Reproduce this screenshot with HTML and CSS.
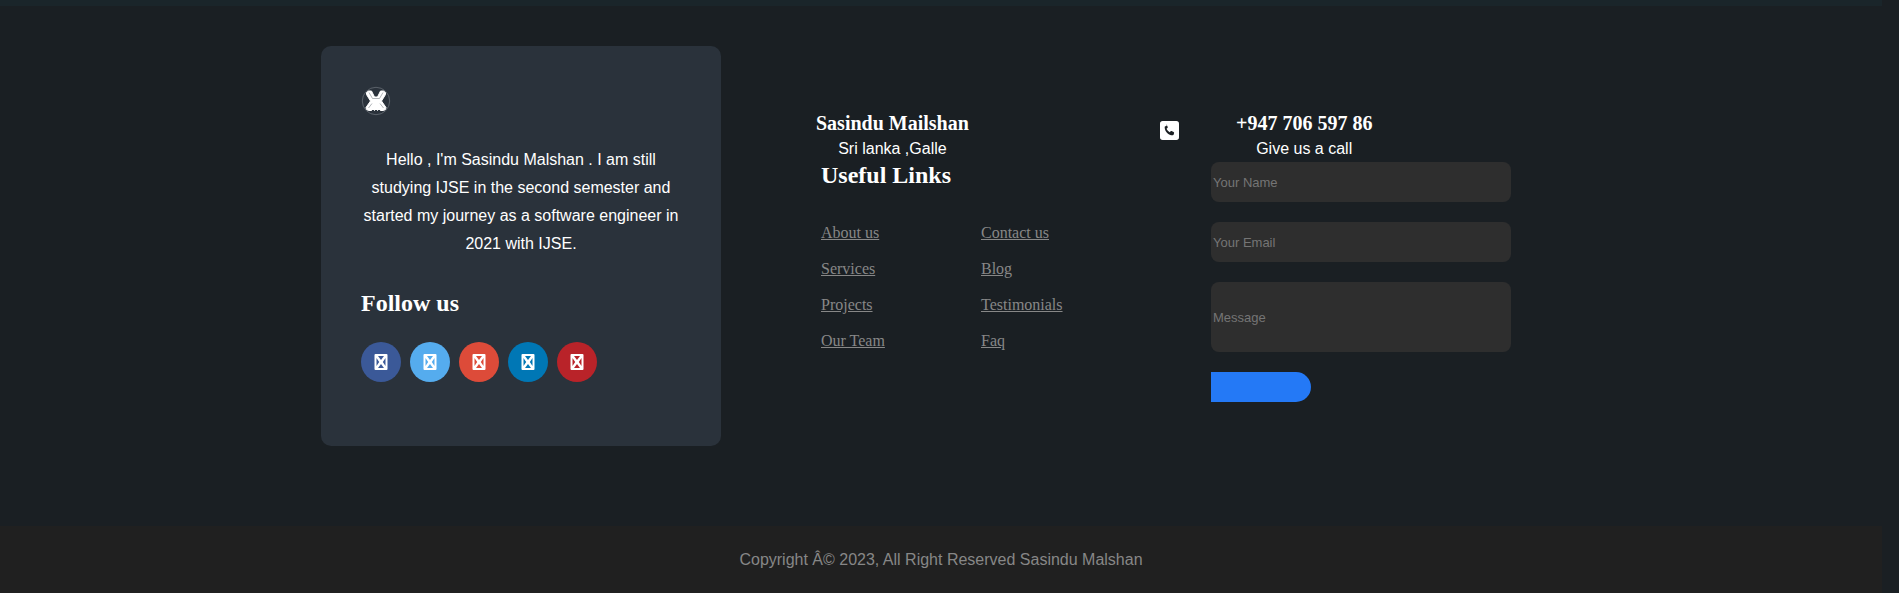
FILE: index.html
```html
<!DOCTYPE html>
<html lang="en">
<head>
<meta charset="utf-8">
<title>Sasindu Malshan</title>
<link rel="stylesheet" href="styles.css">
</head>
<body>
<svg class="sprite" aria-hidden="true">
  <symbol id="box" viewBox="0 0 14 16"><path fill="#fff" fill-rule="evenodd" d="M1.500 0h11a1 1 0 0 1 1 1v14a1 1 0 0 1-1 1h-11a1 1 0 0 1-1-1V1a1 1 0 0 1 1-1zM4 2h6L7 6zM2.500 4L5.200 8l-2.700 4zM11.500 4v8L8.800 8zM7 10l3 4h-6z"/></symbol>
</svg>
<div class="band"></div>
<footer>
  <div class="container">
    <section class="card">
      <a class="logo" href="#" aria-label="Home">
        <svg viewBox="0 0 30 30" width="30" height="30">
          <circle cx="15" cy="15" r="13.700" fill="none" stroke="#5b626a"/>
          <path fill="#fff" stroke="#fff" stroke-width="1" stroke-linejoin="round" d="M5.500 6.500l2-1.500h3l3 6h3l3-6h3l2 1.500v2l-4 6.500 4.500 6.500-.5 2-2 1h-3l-1.500-1.500-1.500 1.500-1.500-1.500-1.500 1.500-1.500-1.500-1.500 1.500h-3l-2-1-.5-2 4.500-6.500-4-6.500z"/>
          <path fill="none" stroke="#8f959b" stroke-width=".7" d="M8 6.500l3.500 6h7L22 6.500M7.500 22l3.500-4.500M22.500 22L19 17.500"/>
        </svg>
      </a>
      <p class="about">Hello , I'm Sasindu Malshan . I am still studying IJSE in the second semester and started my journey as a software engineer in 2021 with IJSE.</p>
      <h3 class="follow">Follow us</h3>
      <nav class="social" aria-label="Social">
        <a class="facebook" href="#" aria-label="Facebook"><svg width="14" height="16"><use href="#box"/></svg></a>
        <a class="twitter" href="#" aria-label="Twitter"><svg width="14" height="16"><use href="#box"/></svg></a>
        <a class="google" href="#" aria-label="Google"><svg width="14" height="16"><use href="#box"/></svg></a>
        <a class="linkedin" href="#" aria-label="LinkedIn"><svg width="14" height="16"><use href="#box"/></svg></a>
        <a class="pinterest" href="#" aria-label="Pinterest"><svg width="14" height="16"><use href="#box"/></svg></a>
      </nav>
    </section>
    <section class="links">
      <div class="info">
        <h4>Sasindu Mailshan</h4>
        <p>Sri lanka ,Galle</p>
      </div>
      <h3>Useful Links</h3>
      <ul>
        <li><a href="#">About us</a></li>
        <li><a href="#">Contact us</a></li>
        <li><a href="#">Services</a></li>
        <li><a href="#">Blog</a></li>
        <li><a href="#">Projects</a></li>
        <li><a href="#">Testimonials</a></li>
        <li><a href="#">Our Team</a></li>
        <li><a href="#">Faq</a></li>
      </ul>
    </section>
    <svg class="phone" viewBox="0 0 448 448" width="19" height="19" aria-hidden="true"><path fill="#fff" fill-rule="evenodd" d="M64 0H384a64 64 0 0 1 64 64V384a64 64 0 0 1-64 64H64a64 64 0 0 1-64-64V64A64 64 0 0 1 64 0zM165 112L126 123c-10 3-17 12-16 22 4 106 90 187 190 191 10 1 19-6 22-16l11-40c2-9-3-19-12-23l-48-20c-8-3-17-1-23 6l-18 22c-35-17-62-46-78-80l22-18c7-5 9-15 6-23l-20-48c-3-7-12-11-20-9z"/></svg>
    <section class="contact">
      <div class="info">
        <h4>+947 706 597 86</h4>
        <p>Give us a call</p>
      </div>
      <form>
        <input type="text" placeholder="Your Name" aria-label="Your Name">
        <input type="email" placeholder="Your Email" aria-label="Your Email">
        <input class="message" type="text" placeholder="Message" aria-label="Message">
        <button type="button" aria-label="Send"></button>
      </form>
    </section>
  </div>
  <div class="copyright"><p>Copyright Â© 2023, All Right Reserved Sasindu Malshan</p></div>
</footer>
</body>
</html>
```
FILE: styles.css
```css
* {
  box-sizing: border-box;
  margin: 0;
  padding: 0;
}

body {
  padding-right: 17px;
  background: #1a1f23;
  color: #fff;
  font-family: "Liberation Serif", "Times New Roman", serif;
  font-size: 16px;
}

p {
  font-family: "Liberation Sans", Arial, sans-serif;
  line-height: 28px;
  text-align: center;
}

h3 {
  font-size: 24px;
  line-height: 27px;
}

h4 {
  font-size: 20px;
  line-height: 24px;
}

.sprite {
  display: none;
}

.band {
  height: 6px;
  background: #1a252a;
}

.container {
  display: flex;
  align-items: flex-start;
  max-width: 1240px;
  margin: 0 auto;
  padding: 40px 0 80px;
}

.card {
  flex: none;
  width: 400px;
  min-height: 400px;
  padding: 40px;
  border-radius: 10px;
  background: #2a323b;
}

.logo {
  display: block;
  height: 30px;
  margin-bottom: 30px;
}

.about {
  margin-bottom: 32px;
}

.follow {
  margin-bottom: 25px;
}

.social {
  display: flex;
  gap: 9px;
}

.social a {
  display: flex;
  align-items: center;
  justify-content: center;
  width: 40px;
  height: 40px;
  border-radius: 50%;
}

.facebook { background: #3b5998; }
.twitter { background: #55acee; }
.google { background: #dd4b39; }
.linkedin { background: #0077b5; }
.pinterest { background: #b92329; }

.info {
  width: fit-content;
}

.info p {
  line-height: 27px;
}

.links {
  flex: 1;
  margin-left: 95px;
  padding-top: 65px;
}

.links h3,
.links ul {
  margin-left: 5px;
}

.links ul {
  display: grid;
  grid-template-columns: 160px 160px;
  row-gap: 18px;
  margin-top: 35px;
  list-style: none;
}

.links li {
  line-height: 18px;
}

.links a {
  color: #878787;
}

.phone {
  flex: none;
  margin: 75px 32px 0 0;
}

.contact {
  flex: none;
  width: 350px;
  padding-top: 65px;
}

.contact .info {
  margin-left: 25px;
}

form {
  display: flex;
  flex-direction: column;
  gap: 20px;
  width: 300px;
}

input {
  height: 40px;
  padding: 0 2px;
  border: 0;
  border-radius: 8px;
  background: #2e2e2e;
  color: #fff;
  font-family: "Liberation Sans", Arial, sans-serif;
  font-size: 13px;
}

input::placeholder {
  color: #757575;
}

.message {
  height: 70px;
}

button {
  width: 100px;
  height: 30px;
  border: 0;
  border-radius: 0 15px 15px 0;
  background: #2479f6;
}

.copyright {
  padding: 20px 0;
  background: #202020;
}

.copyright p {
  color: #878787;
  line-height: 27px;
}
```
